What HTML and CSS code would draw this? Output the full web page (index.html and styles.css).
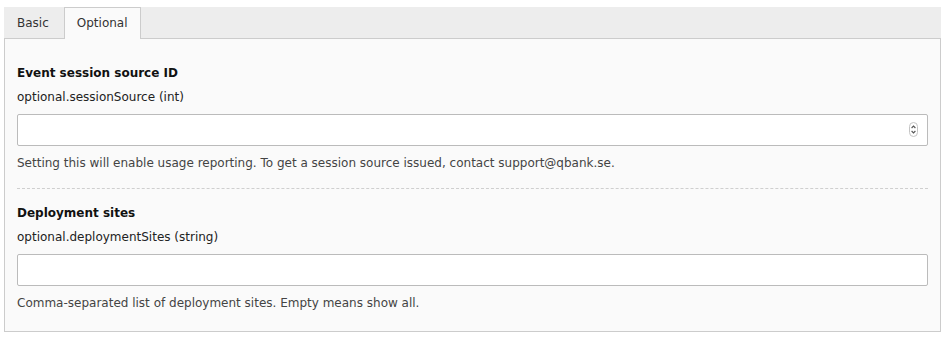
FILE: index.html
```html
<!DOCTYPE html>
<html lang="en">
<head>
<meta charset="utf-8">
<title>Optional settings</title>
<link rel="stylesheet" href="styles.css">
</head>
<body>
<div class="tabs-wrap">
  <ul class="tabs">
    <li class="tab">Basic</li>
    <li class="tab active">Optional</li>
  </ul>
  <div class="panel">
    <div class="field">
      <div class="label">Event session source ID</div>
      <div class="key">optional.sessionSource (int)</div>
      <div class="input-wrap">
        <input class="input" type="text" value="">
        <svg class="spinner" width="9" height="15" viewBox="0 0 9 15">
          <rect x="0.5" y="0.5" width="8" height="14" rx="4" fill="#fff" stroke="#c4c4c4"/>
          <path d="M2.6 6 L4.5 4 L6.4 6" fill="none" stroke="#555" stroke-width="1.1"/>
          <path d="M2.6 9 L4.5 11 L6.4 9" fill="none" stroke="#555" stroke-width="1.1"/>
        </svg>
      </div>
      <div class="help">Setting this will enable usage reporting. To get a session source issued, contact support@qbank.se.</div>
    </div>
    <div class="field second">
      <div class="label">Deployment sites</div>
      <div class="key">optional.deploymentSites (string)</div>
      <div class="input-wrap">
        <input class="input" type="text" value="">
      </div>
      <div class="help">Comma-separated list of deployment sites. Empty means show all.</div>
    </div>
  </div>
</div>
</body>
</html>
```
FILE: styles.css
```css
html, body {
  margin: 0;
  padding: 0;
  background: #ffffff;
}
body {
  font-family: "DejaVu Sans", Verdana, sans-serif;
  font-size: 12px;
  color: #222;
}
.tabs-wrap {
  padding: 7px 8px 0 4px;
}
.tabs {
  list-style: none;
  margin: 0;
  padding: 0;
  display: flex;
  background: #ededed;
  height: 31px;
}
.tab {
  box-sizing: border-box;
  height: 32px;
  line-height: 30px;
  padding: 0 12px;
  margin-right: 2px;
  border: 1px solid transparent;
  border-bottom: none;
  color: #333;
}
.tab.active {
  background: #fafafa;
  border-color: #cccccc;
  position: relative;
  z-index: 1;
}
.panel {
  background: #fafafa;
  border: 1px solid #cccccc;
  padding: 25px 12px 19px 12px;
}
.field {
  display: flex;
  flex-direction: column;
}
.field.second {
  border-top: 1px dashed #cfcfcf;
  margin-top: 16px;
  padding-top: 15px;
}
.label {
  font-weight: bold;
  line-height: 18px;
  color: #111;
}
.key {
  margin-top: 6px;
  line-height: 18px;
  color: #222;
}
.input-wrap {
  position: relative;
  margin-top: 8px;
}
.input {
  display: block;
  box-sizing: border-box;
  width: 100%;
  height: 32px;
  margin: 0;
  border: 1px solid #bbbbbb;
  border-radius: 2px;
  background: #ffffff;
  font-family: inherit;
  font-size: 12px;
  padding: 0 8px;
  outline: none;
}
.spinner {
  position: absolute;
  right: 10px;
  top: 8px;
}
.help {
  margin-top: 8px;
  line-height: 18px;
  color: #444;
}
```
